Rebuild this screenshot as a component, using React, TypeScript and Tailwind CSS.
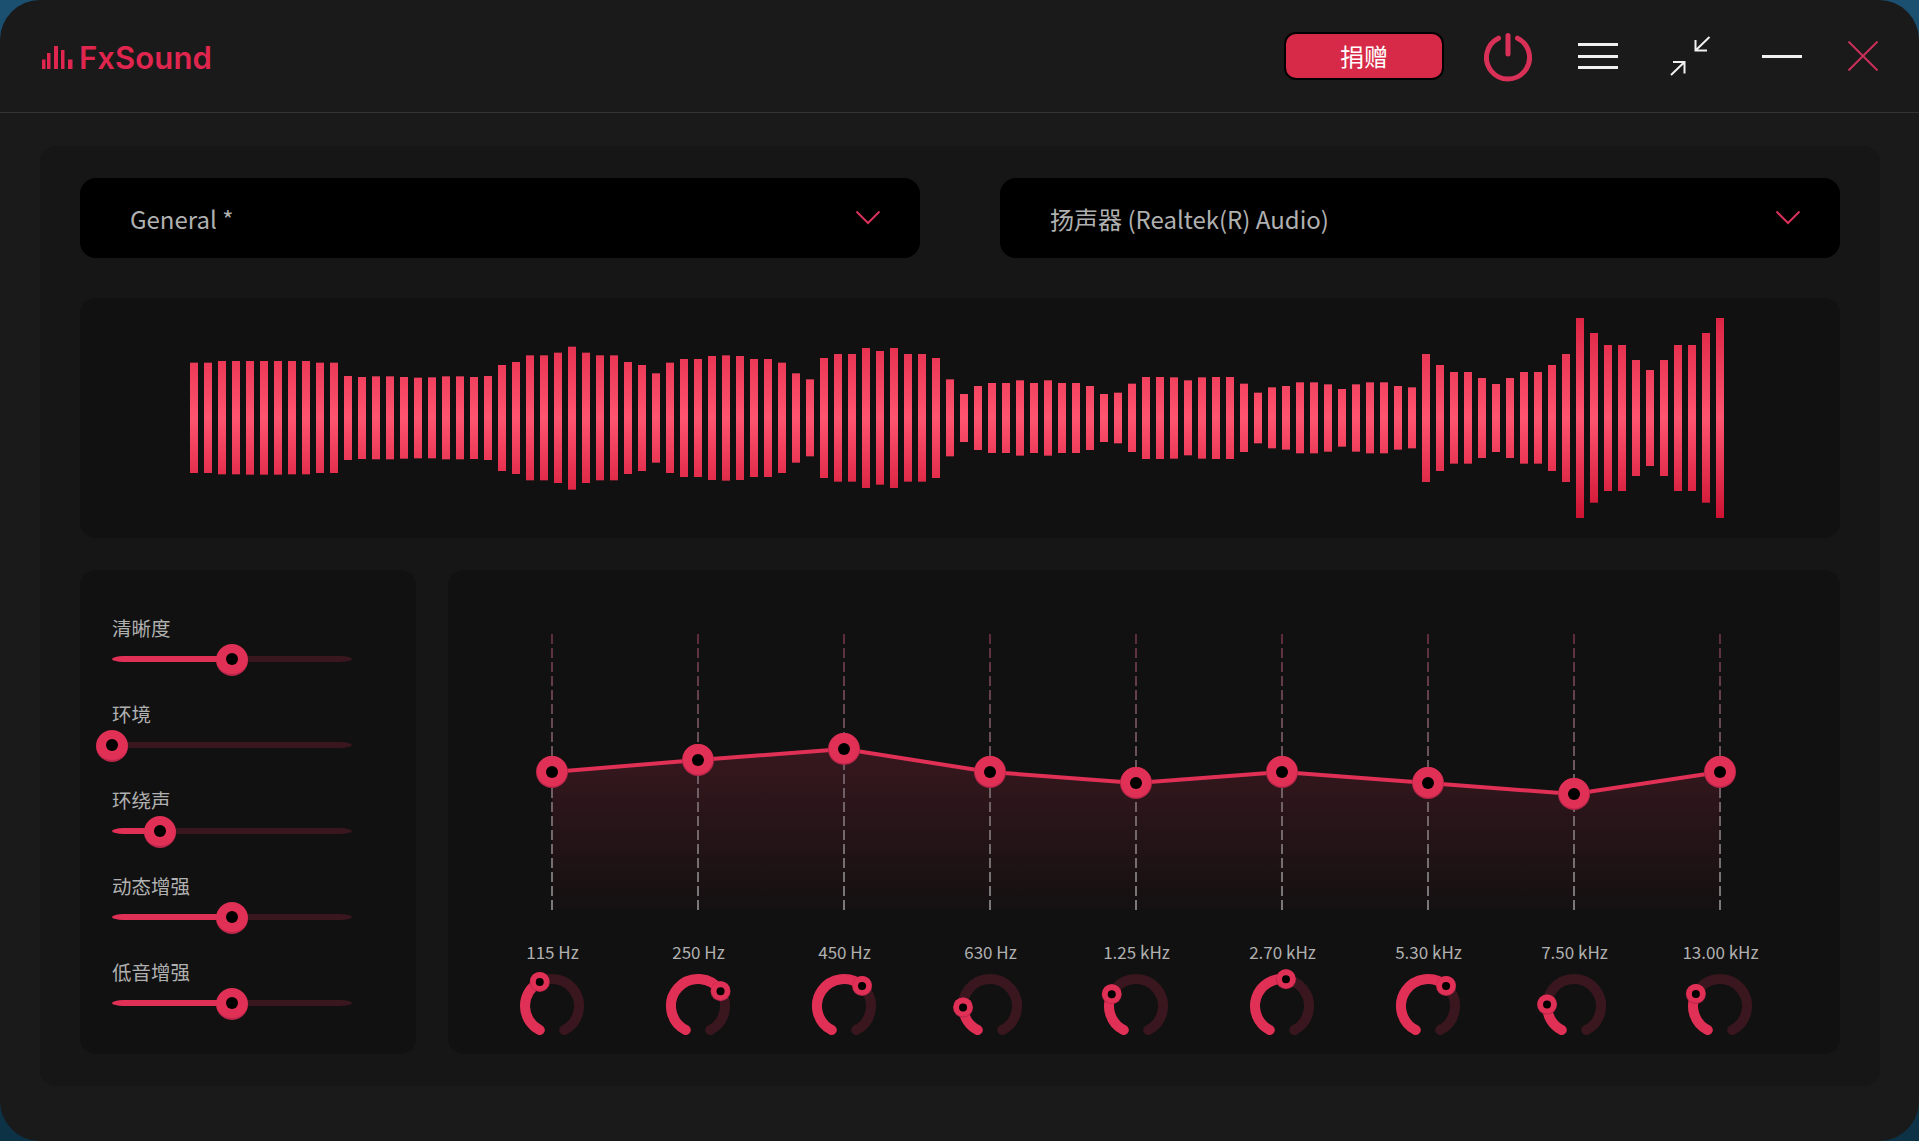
import { Fragment } from 'react';

const CJK = 'font-["Noto_Sans_CJK_SC","Noto_Sans",sans-serif]';

// top and bottom edge of every bar, read off the reference (zoomed y, 3x from y=300)
const BARS: [number, number][] = [
    [188, 519], [188, 519], [183, 523], [183, 523], [183, 524], [183, 524], [183, 524], [183, 523], [183, 523], [188, 519],
    [188, 519], [228, 480], [231, 477], [229, 478], [229, 478], [231, 476], [233, 475], [232, 475], [229, 478], [229, 478],
    [231, 477], [228, 480], [195, 513], [186, 522], [166, 541], [166, 541], [158, 549], [140, 569], [158, 549], [166, 541],
    [166, 541], [186, 522], [195, 513], [220, 488], [188, 519], [177, 531], [177, 531], [168, 540], [166, 542], [168, 540],
    [177, 531], [177, 531], [188, 519], [220, 488], [238, 469], [174, 534], [162, 545], [162, 545], [144, 564], [153, 554],
    [144, 564], [162, 545], [162, 545], [174, 534], [238, 469], [282, 426], [258, 450], [249, 459], [249, 459], [241, 467],
    [249, 459], [241, 467], [249, 459], [249, 459], [258, 450], [282, 426], [278, 430], [251, 456], [231, 477], [231, 477],
    [232, 476], [241, 466], [232, 476], [231, 477], [231, 477], [251, 456], [278, 430], [262, 445], [258, 449], [247, 460],
    [247, 460], [253, 455], [267, 440], [253, 455], [247, 460], [247, 460], [258, 449], [262, 445], [162, 546], [195, 513],
    [216, 491], [216, 491], [234, 474], [252, 456], [234, 474], [216, 491], [216, 491], [195, 513], [162, 546], [54, 654],
    [99, 608], [135, 573], [135, 573], [180, 528], [210, 498], [180, 528], [135, 573], [135, 573], [99, 608], [54, 654],
];

const SLIDERS = [
    { label: '清晰度', value: 50 },
    { label: '环境', value: 0 },
    { label: '环绕声', value: 20 },
    { label: '动态增强', value: 50 },
    { label: '低音增强', value: 50 },
];

// chart y is relative to the top of the chart svg (y=634 on the page)
const BANDS = [
    { label: '115 Hz', y: 138, angle: -27 },
    { label: '250 Hz', y: 126, angle: 56.6 },
    { label: '450 Hz', y: 115, angle: 42 },
    { label: '630 Hz', y: 138, angle: -93 },
    { label: '1.25 kHz', y: 149, angle: -64 },
    { label: '2.70 kHz', y: 138, angle: 8.5 },
    { label: '5.30 kHz', y: 149, angle: 42 },
    { label: '7.50 kHz', y: 160, angle: -87 },
    { label: '13.00 kHz', y: 138, angle: -63.4 },
];

function Chevron() {
    return (
        <svg className="mb-[1px]" width="26" height="15" viewBox="0 0 26 15" fill="none">
            <path d="M1.5 1.5 13 13 24.5 1.5" stroke="#d8305a" strokeWidth="2" />
        </svg>
    );
}

function Dropdown({ text }: { text: string }) {
    return (
        <div className="flex h-[80px] w-[840px] items-center justify-between rounded-[16px] bg-black pl-[50px] pr-[39px]">
            <span className={`pt-[1px] text-[24px] text-[#b0b0b0] ${CJK}`}>{text}</span>
            <Chevron />
        </div>
    );
}

function Thumb() {
    return (
        <div className="flex h-[32px] w-[32px] items-center justify-center rounded-full border-b-2 border-[#b8264a] bg-[#e03055]">
            <div className="h-[12px] w-[12px] rounded-full bg-black" />
        </div>
    );
}

function Slider({ label, value }: { label: string; value: number }) {
    return (
        <div className="h-[86px]">
            <div className={`text-[19.5px] leading-[28px] text-[#b0b0b0] ${CJK}`}>{label}</div>
            <div className="relative mt-[14px] h-[6px] w-[240px] rounded-[12px/3px] bg-[#3a171f]">
                <div className="h-full rounded-[12px/3px] bg-[#e03055]" style={{ width: `${value}%` }} />
                <div className="absolute top-[-12px] ml-[-16px]" style={{ left: `${value}%` }}>
                    <Thumb />
                </div>
            </div>
        </div>
    );
}

function Waveform() {
    return (
        <svg width="1760" height="240" viewBox="0 0 1760 240">
            <defs>
                <linearGradient id="wave" gradientUnits="userSpaceOnUse" x1="0" y1="20" x2="0" y2="220">
                    <stop offset="0" stopColor="#dc2444" />
                    <stop offset="0.5" stopColor="#ff5470" />
                    <stop offset="1" stopColor="#ce1232" />
                </linearGradient>
            </defs>
            {BARS.map(([top, bottom], i) => (
                <rect
                    key={i}
                    x={110 + i * 14}
                    y={top / 3 + 2}
                    width="8"
                    height={(bottom - top) / 3}
                    fill="url(#wave)"
                />
            ))}
        </svg>
    );
}

function Chart() {
    const xs = BANDS.map((_, i) => 104 + i * 146);
    const line = BANDS.map((b, i) => `${xs[i]},${b.y}`).join(' ');
    return (
        <svg width="1392" height="276" viewBox="0 0 1392 276" className="block">
            <defs>
                <linearGradient id="area" x1="0" y1="0" x2="0" y2="1">
                    <stop offset="0" stopColor="#37181e" />
                    <stop offset="1" stopColor="#141011" />
                </linearGradient>
                <linearGradient id="dash" gradientUnits="userSpaceOnUse" x1="0" y1="0" x2="0" y2="276">
                    <stop offset="0" stopColor="#5c2c3a" />
                    <stop offset="0.5" stopColor="#6e5a62" />
                    <stop offset="1" stopColor="#7a7a7a" />
                </linearGradient>
            </defs>
            <polygon points={`${xs[0]},276 ${line} ${xs[8]},276`} fill="url(#area)" />
            {xs.map((x) => (
                <line key={x} x1={x} x2={x + 0.01} y1="0" y2="276" stroke="url(#dash)" strokeWidth="2" strokeDasharray="10 4" />
            ))}
            <polyline points={line} fill="none" stroke="#e03055" strokeWidth="4" />
            {BANDS.map((b, i) => (
                <Fragment key={b.label}>
                    <circle cx={xs[i]} cy={b.y} r="16" fill="#b8264a" />
                    <circle cx={xs[i]} cy={b.y - 0.7} r="15.2" fill="#e03055" />
                    <circle cx={xs[i]} cy={b.y} r="6" fill="#000" />
                </Fragment>
            ))}
        </svg>
    );
}

function polar(deg: number, r = 27) {
    const a = (deg * Math.PI) / 180;
    return { x: 36 + r * Math.sin(a), y: 34 - r * Math.cos(a) };
}

function arc(from: number, to: number) {
    const a = polar(from);
    const b = polar(to);
    const large = to - from > 180 ? 1 : 0;
    return `M${a.x} ${a.y}A27 27 0 ${large} 1 ${b.x} ${b.y}`;
}

function Knob({ angle }: { angle: number }) {
    const p = polar(angle);
    return (
        <svg className="overflow-visible" width="72" height="72" viewBox="0 0 72 72">
            <path d={arc(-153, 153)} fill="none" stroke="#3a171f" strokeWidth="10" strokeLinecap="round" />
            <path d={arc(-153, angle)} fill="none" stroke="#e03055" strokeWidth="10" strokeLinecap="round" />
            <circle cx={p.x} cy={p.y} r="10" fill="#b8264a" />
            <circle cx={p.x} cy={p.y - 0.5} r="9.5" fill="#e03055" />
            <circle cx={p.x} cy={p.y} r="4" fill="#000" />
        </svg>
    );
}

function Logo() {
    return (
        <div className="flex items-center pt-[2px]">
            <svg width="31" height="23" viewBox="0 0 31 23" fill="#e0254f">
                <rect x="0" y="13.5" width="3.5" height="9.5" />
                <rect x="5" y="7" width="3.5" height="16" />
                <rect x="12" y="0" width="4" height="23" />
                <rect x="19" y="4" width="3.5" height="19" />
                <rect x="26" y="13.5" width="4.5" height="9.5" />
            </svg>
            <span className='ml-[6px] mt-[1px] font-["Inter",sans-serif] text-[31px] font-semibold leading-none tracking-[0.1px] text-[#e0254f]'>
                FxSound
            </span>
        </div>
    );
}

function Header() {
    return (
        <header className="flex h-[113px] items-center border-b border-[#333333] pl-[42px]">
            <Logo />
            <div className="ml-auto flex items-center">
                <button className={`flex h-[48px] w-[160px] items-center justify-center rounded-[12px] border-2 border-black bg-[#d62a48] text-[24px] text-white ${CJK}`}>
                    捐赠
                </button>
                <svg className="ml-[40px] mt-[2px]" width="48" height="49" viewBox="0 0 48 49" fill="none" stroke="#d93058" strokeWidth="5" strokeLinecap="round">
                    <path d="M14.5 5.2A21.5 21.5 0 1 0 33.5 5.2" />
                    <path d="M24 2.5V21" />
                </svg>
                <div className="ml-[46px] flex h-[26px] w-[40px] flex-col justify-between">
                    <div className="h-[3px] bg-[#f0f0f0]" />
                    <div className="h-[3px] bg-[#f0f0f0]" />
                    <div className="h-[3px] bg-[#f0f0f0]" />
                </div>
                <svg className="ml-[52px]" width="41" height="40" viewBox="0 0 41 40" fill="none" stroke="#f0f0f0" strokeWidth="2">
                    <path d="M39.5 1 25.5 14.5M25.5 4V14.5H37" />
                    <path d="M1 39 14.5 26M3 26H14.5V37.5" />
                </svg>
                <div className="ml-[51px] h-[3px] w-[40px] bg-[#f0f0f0]" />
                <svg className="ml-[46px] mr-[41px]" width="30" height="30" viewBox="0 0 30 30" fill="none" stroke="#c8305a" strokeWidth="2">
                    <path d="M0.5 0.5 29.5 29.5M29.5 0.5 0.5 29.5" />
                </svg>
            </div>
        </header>
    );
}

export default function App() {
    return (
        <div className="h-[1141px] w-[1919px] overflow-hidden bg-gradient-to-b from-[#1b5070] to-[#0d3246]">
            <div className="h-full rounded-[40px] bg-[#1a1a1a]">
                <Header />
                <main className="ml-[40px] mt-[33px] h-[940px] w-[1840px] rounded-[16px] bg-[#161616] px-[40px] py-[32px]">
                    <div className="flex justify-between">
                        <Dropdown text="General *" />
                        <Dropdown text="扬声器 (Realtek(R) Audio)" />
                    </div>

                    <section className="mt-[40px] h-[240px] rounded-[16px] bg-[#111111]">
                        <Waveform />
                    </section>

                    <div className="mt-[32px] flex h-[484px] gap-[32px]">
                        <section className="w-[336px] rounded-[16px] bg-[#111111] pl-[32px] pt-[44px]">
                            {SLIDERS.map((s) => (
                                <Slider key={s.label} label={s.label} value={s.value} />
                            ))}
                        </section>

                        <section className="w-[1392px] rounded-[16px] bg-[#111111] pt-[64px]">
                            <Chart />
                            <div className="mt-[30px] flex pl-[31px]">
                                {BANDS.map((b) => (
                                    <div key={b.label} className="flex w-[146px] flex-col items-center">
                                        <span className={`pl-[1px] text-[17px] leading-[24px] text-[#b0b0b0] ${CJK}`}>{b.label}</span>
                                        <div className="mt-[8px]">
                                            <Knob angle={b.angle} />
                                        </div>
                                    </div>
                                ))}
                            </div>
                        </section>
                    </div>
                </main>
            </div>
        </div>
    );
}
